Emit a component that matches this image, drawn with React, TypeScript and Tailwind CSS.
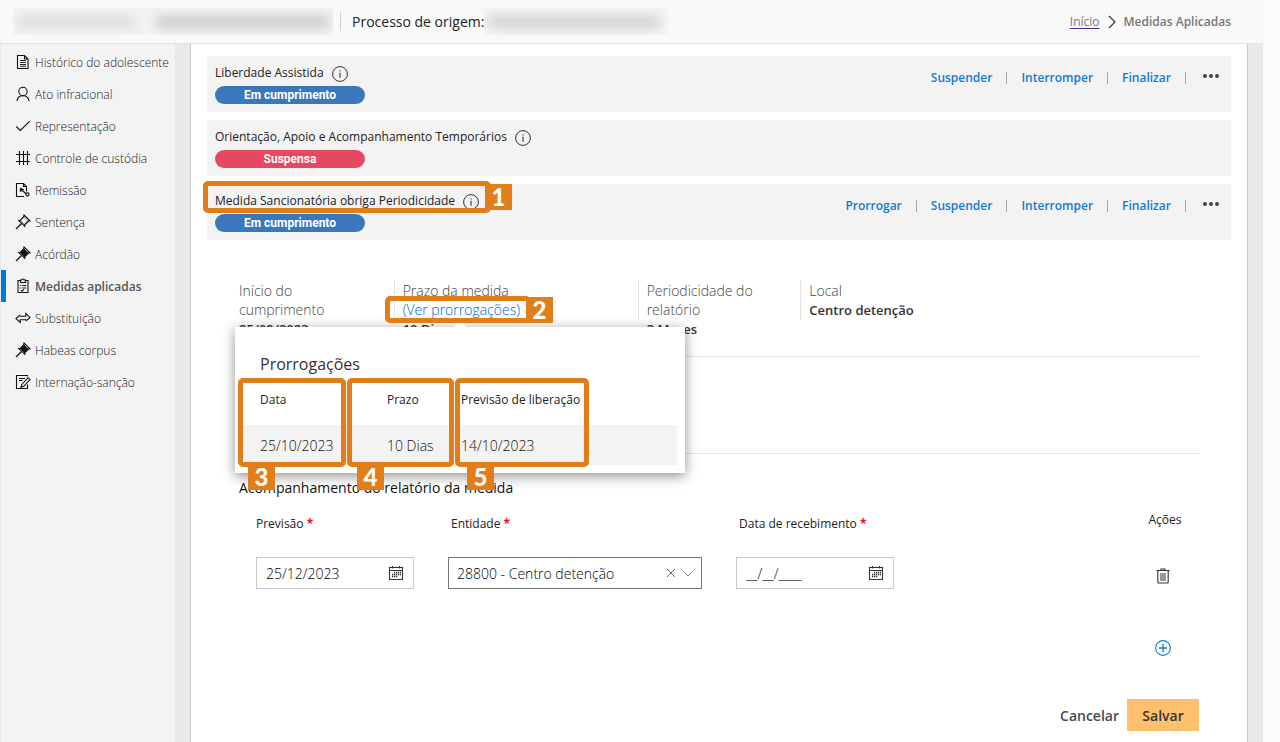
import type { ReactNode } from "react";

type IconProps = { className?: string };

function Svg({ children, className = "size-4" }: { children: ReactNode; className?: string }) {
  return (
    <svg
      viewBox="0 0 16 16"
      className={className}
      fill="none"
      stroke="currentColor"
      strokeWidth="1.1"
      aria-hidden="true"
    >
      {children}
    </svg>
  );
}

const DocumentIcon = () => (
  <Svg>
    <path d="M2.500 1.500h7l3.500 3.500v9.500H2.500zM9.500 1.500v3.500h3.500" />
    <path d="M5 6.500h6M5 8.500h6M5 10.500h6M5 12.300h6" strokeWidth="0.9" />
  </Svg>
);

const PersonIcon = () => (
  <Svg>
    <circle cx="8" cy="5.500" r="4.200" strokeWidth="1.100" />
    <path d="M2 15c.3-3.600 2.400-5.300 6-5.300s5.700 1.700 6 5.300" strokeWidth="1.100" />
  </Svg>
);

const CheckIcon = () => (
  <Svg>
    <path d="M1.300 8.500l4 4L14.800 3.200" strokeWidth="1.100" />
  </Svg>
);

const GridIcon = () => (
  <Svg>
    <path d="M4.500 1v14M8.500 1v14M12.500 1v14M1 4.500h14M1 11.500h14" />
  </Svg>
);

const RemissionIcon = () => (
  <Svg>
    <path d="M9 14.500H1.500v-13h7l3 3v5M8.500 1.500v3h3" />
    <path d="M6 7.500l5.500 4.500" strokeWidth="1.200" />
    <path d="M5.200 6v3.800L8.800 7.400z" fill="currentColor" strokeWidth="0.600" />
    <circle cx="12.500" cy="12.500" r="1.600" />
  </Svg>
);

function PinIcon({ filled = false }: { filled?: boolean }) {
  return (
    <Svg>
      <path d="M9 1l6 5.800-1.400.2-3.600 3.600-.2 1.800-6.200-6 1.800-.2 3.400-3.600z" />
      <path
        d="M8.800 3l4 4-3.500 3.400-4-4z"
        fill={filled ? "currentColor" : "none"}
        strokeWidth={filled ? "1" : "0.500"}
      />
      <path d="M6.500 9.500L1 15" strokeWidth="1.200" />
    </Svg>
  );
}

const ClipboardIcon = () => (
  <Svg>
    <path d="M5.500 2.500H3v12h10v-12h-2.500" />
    <path d="M5.500 2h1.300c0-1.300 2.400-1.300 2.400 0h1.300v2.500h-5z" />
    <path d="M4.800 7.500h1M7.200 7.500h4M4.800 10h1M7.200 10h4M6 12.300l1 .8 2-1.600" />
  </Svg>
);

const SwapIcon = () => (
  <Svg>
    <path d="M4.800 6.300h6V3.500L15 7.400l-3.300 3" />
    <path d="M11.200 9.700h-6v2.800L1 8.600l3.300-3" />
    <path d="M4.800 4.800v1.500M11.200 11.200V9.700" />
  </Svg>
);

const EditDocIcon = () => (
  <Svg>
    <path d="M12.500 2.500v-1h-11v13h11v-4" />
    <path d="M4 4.500h6M4 6.500h3.500" />
    <path d="M6.800 10.500l6.200-6.700 2 1.800-6.200 6.700-2.800 1z" />
  </Svg>
);

const InfoIcon = () => (
  <Svg>
    <circle cx="8" cy="8" r="7.400" strokeWidth="1" />
    <path d="M8 6.700v5M8 4.300v1.300" strokeWidth="1.100" />
  </Svg>
);

const DotsIcon = () => (
  <Svg>
    <g fill="currentColor" stroke="none">
      <circle cx="2" cy="8" r="2" />
      <circle cx="8" cy="8" r="2" />
      <circle cx="14" cy="8" r="2" />
    </g>
  </Svg>
);

const CalendarIcon = ({ className }: IconProps) => (
  <Svg className={className}>
    <path d="M1.500 2.500h13v12h-13zM1.500 5.500h13M4.500 1v2.500M11.500 1v2.500" />
    <path d="M6 7.500h7M4 9.500h9M4 11.500h6" strokeWidth="1.300" strokeDasharray="1.300 .7" />
  </Svg>
);

const TrashIcon = () => (
  <Svg>
    <path d="M1.500 2.500h13M6 2.500v-1.500h4v1.500" />
    <path d="M2.800 2.500V14q0 1 1 1h8.400q1 0 1-1V2.500" />
    <path d="M5 5h6v8H5z" fill="#999" stroke="none" />
  </Svg>
);

const menu: { label: string; icon: ReactNode; active?: boolean }[] = [
  { label: "Histórico do adolescente", icon: <DocumentIcon /> },
  { label: "Ato infracional", icon: <PersonIcon /> },
  { label: "Representação", icon: <CheckIcon /> },
  { label: "Controle de custódia", icon: <GridIcon /> },
  { label: "Remissão", icon: <RemissionIcon /> },
  { label: "Sentença", icon: <PinIcon /> },
  { label: "Acórdão", icon: <PinIcon filled /> },
  { label: "Medidas aplicadas", icon: <ClipboardIcon />, active: true },
  { label: "Substituição", icon: <SwapIcon /> },
  { label: "Habeas corpus", icon: <PinIcon filled /> },
  { label: "Internação-sanção", icon: <EditDocIcon /> },
];

function Callout({ n, box, badge }: { n: number; box: string; badge: string }) {
  return (
    <div className={`pointer-events-none absolute z-20 rounded-[5px] border-[5px] border-[#e27e1a] ${box}`}>
      <span
        className={`absolute flex h-[26px] w-[27px] items-center justify-center bg-[#e27e1a] font-['Lato',sans-serif] text-[24px] leading-none font-black text-white ${badge}`}
      >
        {n}
      </span>
    </div>
  );
}

function MeasureCard({
  title,
  status,
  suspended,
  actions,
  children,
}: {
  title: string;
  status: string;
  suspended?: boolean;
  actions: string[];
  children?: ReactNode;
}) {
  return (
    <article className="relative flex h-14 items-start justify-between bg-[#f3f3f3] pr-3 pl-2">
      <div className="pt-2">
        <div className="flex h-[22px] items-start gap-2">
          <h2 className="text-[12px] leading-[18px] font-normal text-[#222]">{title}</h2>
          <button type="button" aria-label={`Informações: ${title}`} className="mt-[2px] text-[#333]">
            <InfoIcon />
          </button>
        </div>
        <div
          className={`h-[18px] w-[150px] rounded-full text-center font-['Roboto',sans-serif] text-[12px] leading-[18px] font-bold text-white ${
            suspended ? "bg-[#e74861]" : "bg-[#3a78bb]"
          }`}
        >
          {status}
        </div>
      </div>
      {actions.length > 0 && (
        <div className="flex items-start pt-3">
          {actions.map((a) => (
            <div key={a} className="flex items-center">
              <button type="button" className="text-[12px] leading-5 font-semibold text-[#0f7cd6]">
                {a}
              </button>
              <span className="mx-[14px] h-3 w-px bg-[#a6a6a6]" />
            </div>
          ))}
          <button type="button" aria-label="Mais ações" className="ml-[3px] text-[#444]">
            <DotsIcon />
          </button>
        </div>
      )}
      {children}
    </article>
  );
}

const Required = () => <span className="font-bold text-[#e81123]">*</span>;

const labelClass = "mb-[23px] block text-[12px] leading-5 font-normal text-[#222]";

function DateField({ id, label, value, indent }: { id: string; label: string; value: string; indent?: boolean }) {
  return (
    <div className="w-1/5 px-[17px]">
      <label htmlFor={id} className={`${labelClass} ${indent ? "pl-[3px]" : ""}`}>
        {label} <Required />
      </label>
      <div className="flex h-8 items-center border border-[#c8c8c8] px-[9px]">
        <input
          id={id}
          defaultValue={value}
          className="w-full min-w-0 text-[14px] font-light text-black outline-none"
        />
        <button type="button" aria-label="Abrir calendário" className="text-[#333]">
          <CalendarIcon className="size-4" />
        </button>
      </div>
    </div>
  );
}

const labelText = "text-[14px] leading-[19px] font-light text-[#444]";
const valueText = "text-[13px] leading-5 font-semibold text-[#333]";

export default function App() {
  return (
    <div className="flex min-h-screen flex-col bg-[#fbfbfb] pr-[17px] font-['Open_Sans','Noto_Sans',sans-serif] text-[#333]">
      <header className="flex h-11 items-center justify-between border-b border-[#e5e5e5] bg-[#f9f9f9] pr-8 pl-[13px]">
        <div className="flex items-center">
          <div className="flex h-[27px] w-80 items-center gap-5 overflow-hidden bg-[#f4f4f4] px-1" aria-hidden="true">
            <div className="h-3 w-[120px] bg-[#dadad7] blur-[6px]" />
            <div className="h-3 w-[174px] bg-[#c8c8c8] blur-[6px]" />
          </div>
          <span className="mr-[11px] ml-[7px] h-[19px] w-px bg-[#d0d0d0]" />
          <span className="text-[14px] font-normal text-[#222]">Processo de origem:</span>
          <div className="flex h-[27px] w-[184px] items-center overflow-hidden bg-[#f6f6f6] px-1" aria-hidden="true">
            <div className="h-3 w-[172px] bg-[#cdcdcd] blur-[6px]" />
          </div>
        </div>
        <nav aria-label="Trilha" className="flex items-center text-[12px]">
          <a href="#inicio" className="text-[#777] underline decoration-[#4b2a8c] underline-offset-2">
            Início
          </a>
          <svg viewBox="0 0 8 14" className="mx-2 h-[14px] w-2" fill="none" stroke="#333" strokeWidth="1.200" aria-hidden="true">
            <path d="M1 1l6 6-6 6" />
          </svg>
          <span className="font-semibold text-[#777]">Medidas Aplicadas</span>
        </nav>
      </header>

      <div className="flex flex-1">
        <aside className="w-[175px] shrink-0 border-l border-[#e9e9e9] bg-[#f3f3f3] pt-[2px]">
          <ul>
            {menu.map((m) => (
              <li key={m.label}>
                <a
                  href="#menu"
                  className={`flex h-8 items-center gap-1 border-l-[5px] pl-[9px] text-[12px] whitespace-nowrap ${
                    m.active ? "border-[#0078d7] font-semibold text-[#555]" : "border-transparent font-light text-[#222]"
                  }`}
                >
                  <span className="text-[#111]">{m.icon}</span>
                  <span className="pt-[2px]">{m.label}</span>
                </a>
              </li>
            ))}
          </ul>
        </aside>

        <main className="flex min-w-0 flex-1 bg-[#e9e9e9] px-[15px]">
          <div className="min-w-0 flex-1 border-x border-[#c8c8c8] bg-white px-4 pt-3 pb-[11px]">
            <div className="flex flex-col gap-2">
              <MeasureCard
                title="Liberdade Assistida"
                status="Em cumprimento"
                actions={["Suspender", "Interromper", "Finalizar"]}
              />
              <MeasureCard
                title="Orientação, Apoio e Acompanhamento Temporários"
                status="Suspensa"
                suspended
                actions={[]}
              />
              <MeasureCard
                title="Medida Sancionatória obriga Periodicidade"
                status="Em cumprimento"
                actions={["Prorrogar", "Suspender", "Interromper", "Finalizar"]}
              >
                <Callout n={1} box="-top-[3px] -left-1 h-8 w-72" badge="-top-[2px] -right-[26px]" />
              </MeasureCard>
            </div>

            <div className="relative px-8 pt-10">
              <div className="border-b border-[#e5e5e5] pb-9">
                <dl className="-mx-2 grid grid-cols-12">
                  <div className="col-span-2 h-10 px-2 pt-px">
                    <dt className={labelText}>
                      Início do
                      <br />
                      cumprimento
                    </dt>
                    <dd className={valueText}>25/09/2023</dd>
                  </div>
                  <div className="col-span-3 h-10 border-l border-[#e5e5e5] px-2 pt-px">
                    <dt className={labelText}>
                      Prazo da medida
                      <br />
                      <button type="button" className="text-[#0064c8]">
                        (Ver prorrogações)
                      </button>
                    </dt>
                    <dd className={valueText}>10 Dias</dd>
                  </div>
                  <div className="col-span-2 h-10 border-l border-[#e5e5e5] px-2 pt-px">
                    <dt className={labelText}>
                      Periodicidade do
                      <br />
                      relatório
                    </dt>
                    <dd className={valueText}>3 Meses</dd>
                  </div>
                  <div className="col-span-5 h-10 border-l border-[#e5e5e5] px-2 pt-px">
                    <dt className={labelText}>Local</dt>
                    <dd className={valueText}>Centro detenção</dd>
                  </div>
                </dl>
              </div>
              <div className="h-[97px] border-b border-[#e5e5e5]" />

              <Callout n={2} box="top-14 left-[178px] h-[27px] w-[146px]" badge="-top-1 -right-[27px]" />

              <div
                role="dialog"
                aria-labelledby="prorrogacoes"
                className="absolute top-[87px] left-7 z-10 w-[450px] bg-white px-2 pt-[25px] pb-2 shadow-[0_3px_12px_rgba(0,0,0,0.45)]"
              >
                <span className="absolute -top-1 left-[219px] size-3 rotate-45 bg-white" />
                <h3 id="prorrogacoes" className="relative pl-[17px] text-[16px] leading-6 font-normal text-[#333]">
                  Prorrogações
                </h3>
                <table className="w-full table-fixed text-left">
                  <colgroup>
                    <col className="w-[144px]" />
                    <col className="w-[74px]" />
                    <col />
                  </colgroup>
                  <thead>
                    <tr className="h-[49px] text-[12px] text-[#222]">
                      <th className="pb-[2px] pl-[17px] font-normal">Data</th>
                      <th className="pb-[2px] font-normal">Prazo</th>
                      <th className="pb-[2px] font-normal whitespace-nowrap">Previsão de liberação</th>
                    </tr>
                  </thead>
                  <tbody>
                    <tr className="h-10 bg-[#f3f3f3] text-[14px] font-light text-[#111]">
                      <td className="pl-[17px]">25/10/2023</td>
                      <td>10 Dias</td>
                      <td>14/10/2023</td>
                    </tr>
                  </tbody>
                </table>
                <Callout n={3} box="top-[51px] left-[3px] h-[89px] w-[108px]" badge="-bottom-7 left-[5px]" />
                <Callout n={4} box="top-[51px] left-28 h-[89px] w-[107px]" badge="-bottom-7 left-[5px]" />
                <Callout n={5} box="top-[51px] left-[220px] h-[89px] w-[134px]" badge="-bottom-7 left-[7px]" />
              </div>
            </div>

            <form className="px-8 pt-6">
              <h3 className="text-[14px] leading-5 font-normal text-[#111]">Acompanhamento do relatório da medida</h3>
              <div className="flex pt-4">
                <DateField id="previsao" label="Previsão" value="25/12/2023" />
                <div className="w-[30%] px-[17px]">
                  <label htmlFor="entidade" className={`${labelClass} pl-[3px]`}>
                    Entidade <Required />
                  </label>
                  <div className="relative">
                    <select
                      id="entidade"
                      className="h-8 w-full appearance-none border border-[#767676] bg-white pl-2 text-[14px] font-light text-black outline-none"
                    >
                      <option>28800 - Centro detenção</option>
                    </select>
                    <svg
                      viewBox="0 0 28 12"
                      className="pointer-events-none absolute top-[10px] right-2 h-3 w-7"
                      fill="none"
                      stroke="#666"
                      aria-hidden="true"
                    >
                      <path d="M1 2l8 8M9 2l-8 8" />
                      <path d="M16.500 3.500l5.500 5.500 5.500-5.500" stroke="#8a8a8a" />
                    </svg>
                  </div>
                </div>
                <DateField id="recebimento" label="Data de recebimento" value="__/__/____" indent />
                <div className="ml-auto flex w-[72px] flex-col items-center">
                  <span className="-mt-1 pl-1 text-[12px] leading-5 font-normal text-[#222]">Ações</span>
                  <button type="button" aria-label="Excluir" className="mt-[38px] text-[#333]">
                    <TrashIcon />
                  </button>
                  <button type="button" aria-label="Adicionar" className="mt-14 text-[#0f7cd6]">
                    <Svg>
                      <circle cx="8" cy="8" r="7.400" strokeWidth="1.100" />
                      <path d="M8 4v8M4 8h8" strokeWidth="1.300" />
                    </Svg>
                  </button>
                </div>
              </div>
              <div className="flex justify-end gap-2 pt-[43px] text-[14px] font-semibold">
                <button type="button" className="text-[#4a4a4a]">
                  Cancelar
                </button>
                <button type="submit" className="h-8 w-[72px] bg-[#ffc06e] text-[#333]">
                  Salvar
                </button>
              </div>
            </form>
          </div>
        </main>
      </div>
    </div>
  );
}
